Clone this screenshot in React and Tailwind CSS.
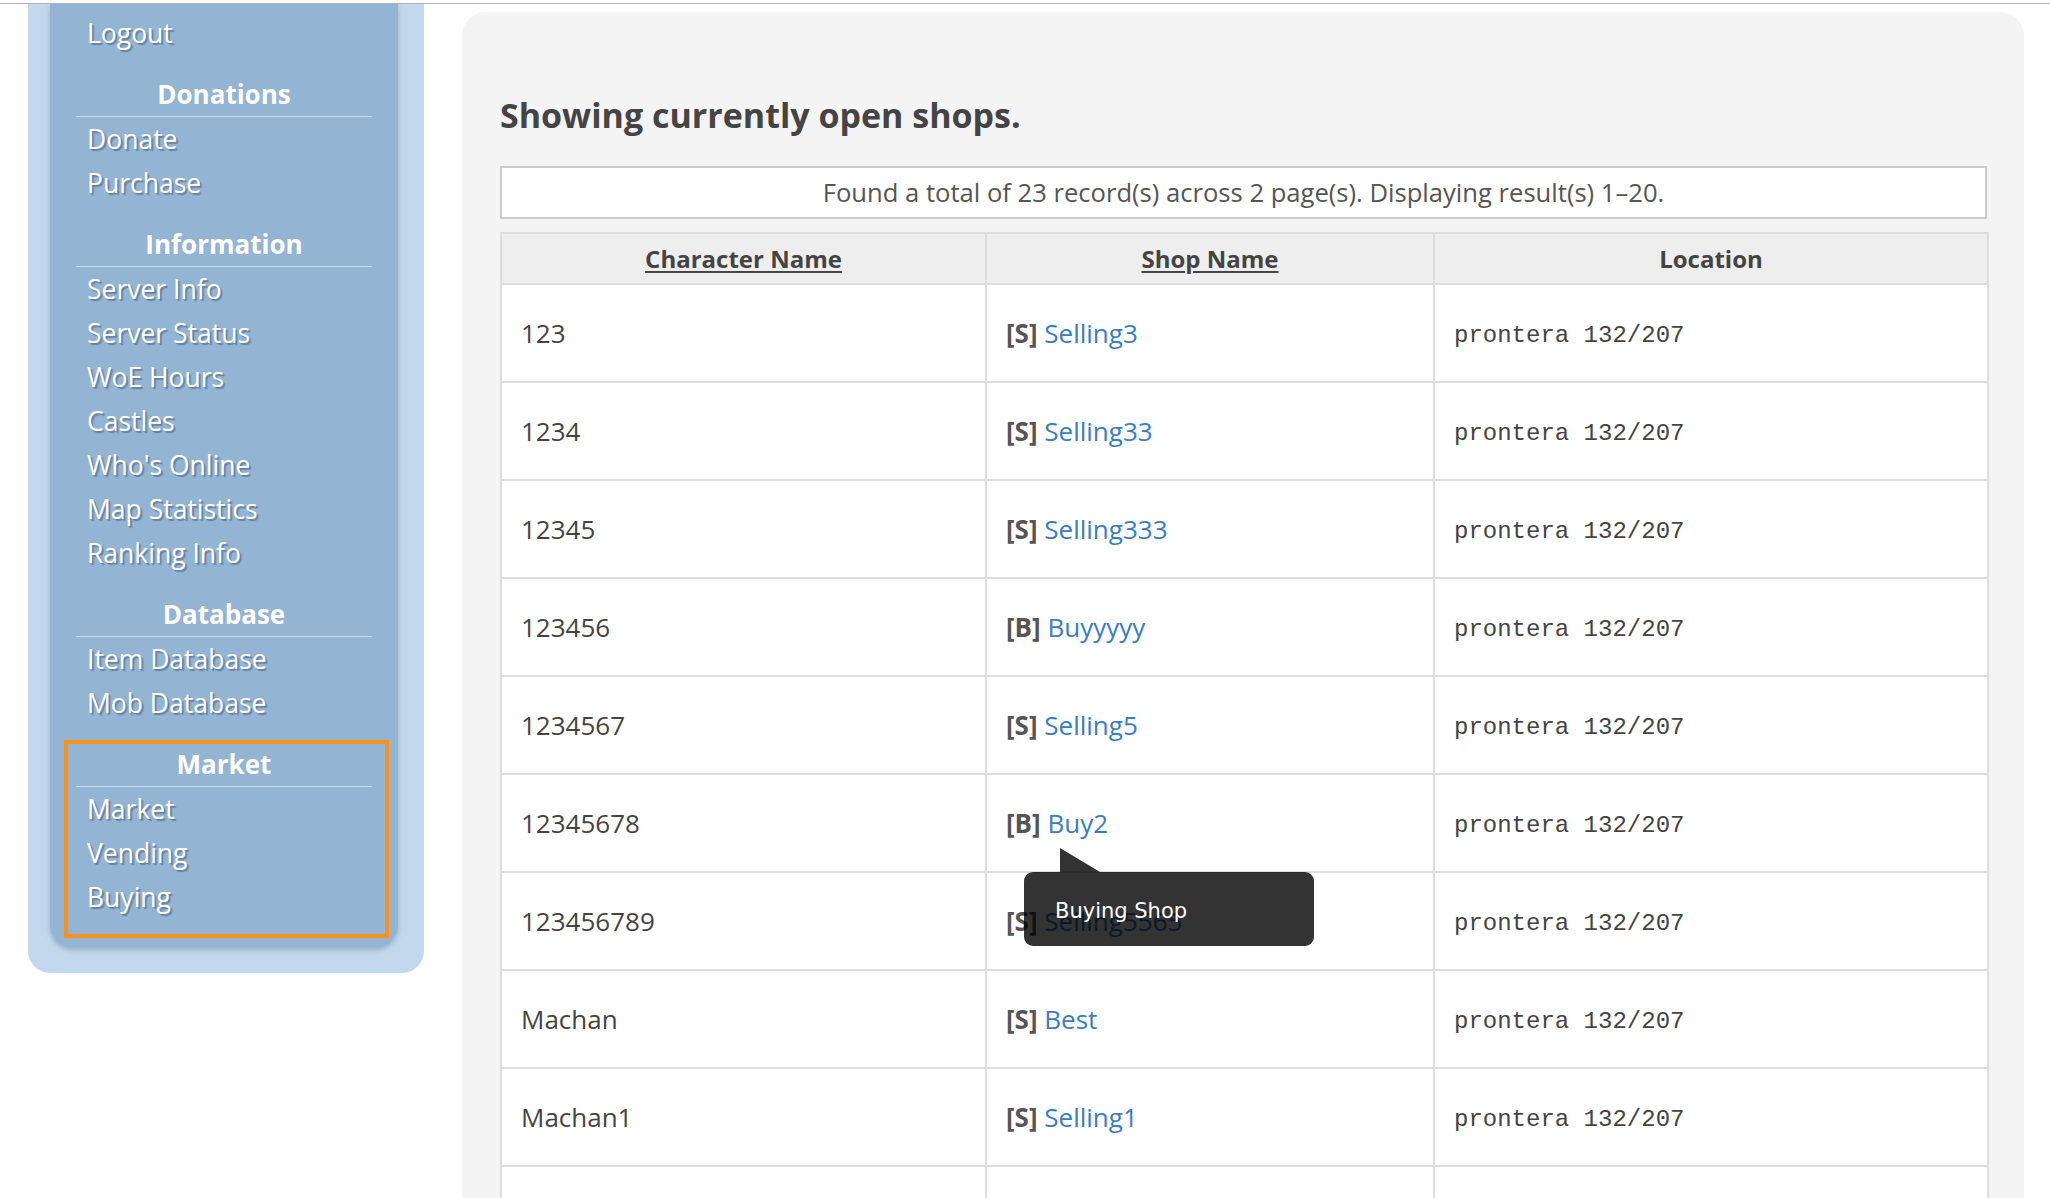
const menu = [
  { items: ['Logout'] },
  { title: 'Donations', items: ['Donate', 'Purchase'] },
  {
    title: 'Information',
    items: ['Server Info', 'Server Status', 'WoE Hours', 'Castles', "Who's Online", 'Map Statistics', 'Ranking Info'],
  },
  { title: 'Database', items: ['Item Database', 'Mob Database'] },
  { title: 'Market', items: ['Market', 'Vending', 'Buying'], highlight: true },
]

const shops = [
  { char: '123', type: 'S', name: 'Selling3' },
  { char: '1234', type: 'S', name: 'Selling33' },
  { char: '12345', type: 'S', name: 'Selling333' },
  { char: '123456', type: 'B', name: 'Buyyyyy' },
  { char: '1234567', type: 'S', name: 'Selling5' },
  { char: '12345678', type: 'B', name: 'Buy2', tooltip: true },
  { char: '123456789', type: 'S', name: 'Selling5565' },
  { char: 'Machan', type: 'S', name: 'Best' },
  { char: 'Machan1', type: 'S', name: 'Selling1' },
  { char: '', type: '', name: '' },
]

function MenuSection({ section }) {
  return (
    <div className={section.highlight ? 'relative' : ''}>
      {section.title && (
        <div className="mt-[18px] mx-[26px] border-b border-[#c9d9ea]">
          <h3 className="h-[43px] leading-[43px] text-center font-bold text-white text-[26px]">{section.title}</h3>
        </div>
      )}
      {section.items.map((item) => (
        <a
          key={item}
          href="#"
          className="block h-[44px] leading-[44px] pl-[37px] text-[26.5px] text-white [text-shadow:2px_2px_1px_#6581a1]"
        >
          {item}
        </a>
      ))}
      {section.highlight && (
        <div className="absolute top-[-3px] left-[14px] right-[9px] bottom-[-19px] border-[4px] border-[#f7921e]" />
      )}
    </div>
  )
}

function Tooltip() {
  return (
    <div className="absolute left-[37px] top-[97px] z-10 w-[290px] h-[74px] rounded-[9px] bg-black/80 flex items-center pl-[31px] pt-[5px]">
      <svg className="absolute left-[36px] top-[-24px]" width="40" height="24" viewBox="0 0 40 24">
        <polygon points="0,0 0,24 40,24" fill="rgba(0,0,0,0.8)" />
      </svg>
      <span className="text-white text-[21px] font-['DejaVu_Sans',sans-serif]">Buying Shop</span>
    </div>
  )
}

export default function App() {
  return (
    <div className="h-[1198px] overflow-hidden bg-white font-['Open_Sans','DejaVu_Sans',sans-serif]">
      <div className="h-[3px]" />
      <div className="h-px bg-[#b4b4b4]" />

      <div className="flex items-start">
        {/* Sidebar */}
        <aside className="ml-[28px] w-[396px] shrink-0 bg-[#c3d8ec] rounded-b-[22px] pl-[22px] pr-[26px] pb-[26px]">
          <div className="bg-[#94b4d4] rounded-b-[22px] pt-[7px] pb-[28px] shadow-[0_3px_5px_rgba(70,100,140,0.35)]">
            {menu.map((section, i) => (
              <MenuSection key={i} section={section} />
            ))}
          </div>
        </aside>

        {/* Main content */}
        <main className="ml-[38px] mt-[8px] w-[1562px] shrink-0 bg-[#f4f4f4] rounded-[24px] pt-[86px] pl-[38px] pr-[37px] pb-10 min-h-[1300px]">
          <h2 className="text-[34px] leading-none font-bold text-[#444]">Showing currently open shops.</h2>

          <div className="mt-[34px] h-[53px] border-2 border-[#cccccc] bg-white flex items-center justify-center pt-[2px] text-[25.6px] text-[#555]">
            Found a total of 23 record(s) across 2 page(s). Displaying result(s) 1–20.
          </div>

          <table className="mt-[13px] w-[1487px] table-fixed border-collapse bg-white text-[26px] text-[#444]">
            <colgroup>
              <col className="w-[485px]" />
              <col className="w-[448px]" />
              <col className="w-[554px]" />
            </colgroup>
            <thead>
              <tr className="bg-[#eeeeee] text-[24px]">
                <th className="h-[51px] border-2 border-[#dddddd] font-bold">
                  <a href="#" className="underline underline-offset-[3px]">Character Name</a>
                </th>
                <th className="border-2 border-[#dddddd] font-bold">
                  <a href="#" className="underline underline-offset-[3px]">Shop Name</a>
                </th>
                <th className="border-2 border-[#dddddd] font-bold">Location</th>
              </tr>
            </thead>
            <tbody>
              {shops.map((shop, i) => (
                <tr key={i}>
                  <td className="h-[98px] border-2 border-[#dddddd] pl-[19px]">{shop.char}</td>
                  <td className="relative border-2 border-[#dddddd] pl-[19px]">
                    {shop.type && <span className="font-bold text-[#555]">[{shop.type}]</span>}{' '}
                    <a href="#" className="text-[#3a7dc2]">{shop.name}</a>
                    {shop.tooltip && <Tooltip />}
                  </td>
                  <td className="border-2 border-[#dddddd] pl-[19px] pt-[6px] font-['Liberation_Mono',monospace] text-[24px]">
                    {shop.char && 'prontera 132/207'}
                  </td>
                </tr>
              ))}
            </tbody>
          </table>
        </main>
      </div>
    </div>
  )
}
